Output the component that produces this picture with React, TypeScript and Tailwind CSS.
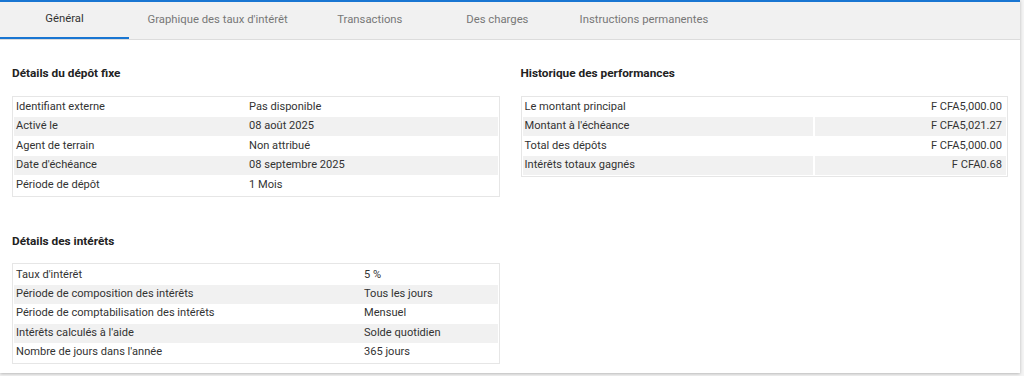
import React from "react";

const tabs = [
  "Général",
  "Graphique des taux d'intérêt",
  "Transactions",
  "Des charges",
  "Instructions permanentes",
];

const depot: [string, string][] = [
  ["Identifiant externe", "Pas disponible"],
  ["Activé le", "08 août 2025"],
  ["Agent de terrain", "Non attribué"],
  ["Date d'échéance", "08 septembre 2025"],
  ["Période de dépôt", "1 Mois"],
];

const perf: [string, string][] = [
  ["Le montant principal", "F CFA5,000.00"],
  ["Montant à l'échéance", "F CFA5,021.27"],
  ["Total des dépôts", "F CFA5,000.00"],
  ["Intérêts totaux gagnés", "F CFA0.68"],
];

const interets: [string, string][] = [
  ["Taux d'intérêt", "5 %"],
  ["Période de composition des intérêts", "Tous les jours"],
  ["Période de comptabilisation des intérêts", "Mensuel"],
  ["Intérêts calculés à l'aide", "Solde quotidien"],
  ["Nombre de jours dans l'année", "365 jours"],
];

function LeftTable({ rows, col }: { rows: [string, string][]; col: string }) {
  return (
    <div className="border border-[#e6e6e6] p-[1px]">
      {rows.map(([k, v], i) => (
        <div
          key={k}
          className={`flex h-[19.4px] items-center ${i % 2 === 1 ? "bg-[#f1f1f1]" : ""}`}
        >
          <div className={`${col} shrink-0 pl-[2px]`}>{k}</div>
          <div className="flex-1">{v}</div>
        </div>
      ))}
    </div>
  );
}

export default function App() {
  return (
    <div
      className="h-[376px] w-[1024px] bg-[#f4f4f4] text-[11.1px] text-[#333]"
      style={{ fontFamily: "Roboto, 'Liberation Sans', sans-serif" }}
    >
      <div className="h-[373px] w-[1020px] border-t-2 border-[#1976d2] bg-white shadow-[0_1px_3px_rgba(0,0,0,0.25)]">
        <div className="flex h-[38px] border-b border-[#dcdcdc] bg-[#f1f1f1]">
          {tabs.map((t, i) => (
            <div
              key={t}
              className={`flex shrink-0 items-center justify-center text-[11.3px] ${
                i === 0
                  ? "w-[129px] border-b-2 border-[#1976d2] text-[#333]"
                  : "min-w-[127.5px] px-[18.5px] text-[#777]"
              }`}
            >
              {t}
            </div>
          ))}
        </div>
        <div className="flex px-[12px]">
          <div className="w-[489px]">
            <div className="mt-[25px] mb-[13px] text-[11.8px] font-bold text-[#222]">
              Détails du dépôt fixe
            </div>
            <LeftTable rows={depot} col="w-[235px]" />
            <div className="mt-[36px] mb-[13px] text-[11.8px] font-bold text-[#222]">
              Détails des intérêts
            </div>
            <LeftTable rows={interets} col="w-[350px]" />
          </div>
          <div className="ml-[21px] w-[489px]">
            <div className="mt-[25px] mb-[13px] text-[11.8px] font-bold text-[#222]">
              Historique des performances
            </div>
            <div className="border border-[#e6e6e6] p-[1px]">
              {perf.map(([k, v], i) => (
                <div key={k} className="flex h-[19.4px] gap-[2px]">
                  <div
                    className={`flex w-[290px] shrink-0 items-center pl-[2px] ${
                      i % 2 === 1 ? "bg-[#f1f1f1]" : ""
                    }`}
                  >
                    {k}
                  </div>
                  <div
                    className={`flex flex-1 items-center justify-end pr-[4px] ${
                      i % 2 === 1 ? "bg-[#f1f1f1]" : ""
                    }`}
                  >
                    {v}
                  </div>
                </div>
              ))}
            </div>
          </div>
        </div>
      </div>
    </div>
  );
}
